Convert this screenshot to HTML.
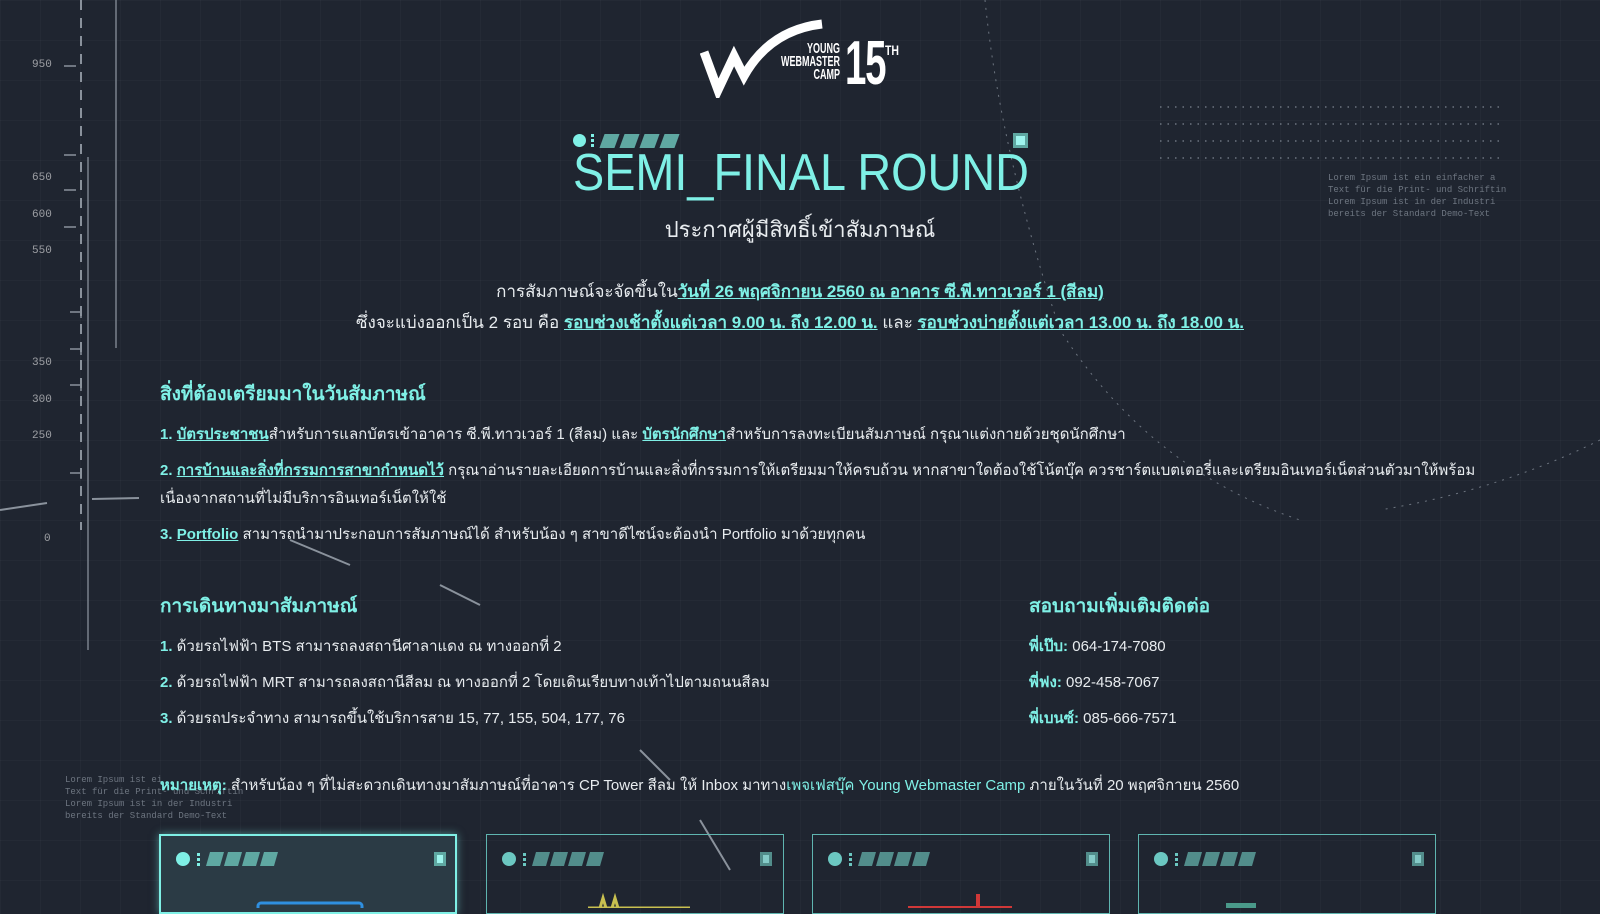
<!DOCTYPE html>
<html><head><meta charset="utf-8"><style>
*{margin:0;padding:0;box-sizing:border-box}
body{width:1600px;height:908px;overflow:hidden;background:#1f2530;font-family:"Liberation Sans","DejaVu Sans",sans-serif;color:#e8ecef;position:relative;
background-image:linear-gradient(rgba(255,255,255,.025) 1px,transparent 1px),linear-gradient(90deg,rgba(255,255,255,.025) 1px,transparent 1px);background-size:40px 40px}
.a{position:absolute}
.t{color:#7ff0e6}
u{color:#7ff0e6;font-weight:bold}
.line{white-space:nowrap;font-size:15px}
h2{font-size:19px;color:#7ff0e6;font-weight:bold;position:absolute;white-space:nowrap}
.n{color:#7ff0e6;font-weight:bold}
.card{position:absolute;top:834px;width:298px;height:80px;border:1px solid #5fb5b0}
.card.on{background:#2b3b45;border:2px solid #7ff0e6;box-shadow:0 0 8px rgba(127,240,230,.5)}
.lab{font-size:11px;color:#eee;opacity:.6;font-family:"Liberation Mono",monospace}
.lorem{font-family:"Liberation Mono",monospace;font-size:9px;color:#6d7580;line-height:12px}
</style></head><body>
<svg class="a" style="left:0;top:0" width="1600" height="908">
<line x1="81" y1="0" x2="81" y2="530" stroke="#8a929c" stroke-width="2" stroke-dasharray="10,8"/>
<line x1="116" y1="0" x2="116" y2="348" stroke="#7a828c" stroke-width="1.5"/>
<line x1="88" y1="157" x2="88" y2="650" stroke="#7a828c" stroke-width="1.5"/>
<g stroke="#8a929c" stroke-width="1.5"><line x1="64" y1="66" x2="76" y2="66"/><line x1="64" y1="155" x2="76" y2="155"/><line x1="64" y1="190" x2="76" y2="190"/><line x1="64" y1="227" x2="76" y2="227"/>
<polyline points="70,312 81,312 81,318" fill="none"/><polyline points="70,349 81,349 81,355" fill="none"/><polyline points="70,385 81,385 81,391" fill="none"/><polyline points="70,473 81,473 81,479" fill="none"/></g>
<line x1="0" y1="510" x2="47" y2="503" stroke="#8a929c" stroke-width="2"/>
<line x1="92" y1="499" x2="139" y2="498" stroke="#8a929c" stroke-width="2"/>
<path d="M290 540 L350 565 M440 585 L480 605 M640 750 L670 780 M700 820 L730 870" stroke="#8a929c" stroke-width="2"/>
<path d="M985 0 Q1000 150 1060 330 Q1150 470 1300 520" stroke="#6d7580" stroke-dasharray="2,6" fill="none"/>
<path d="M1600 440 Q1500 490 1380 510" stroke="#6d7580" stroke-dasharray="2,6" fill="none"/>
<g stroke="#6d7580" stroke-dasharray="1.5,6" stroke-width="1.5">
<line x1="1160" y1="107" x2="1500" y2="107"/><line x1="1160" y1="124" x2="1500" y2="124"/><line x1="1160" y1="141" x2="1500" y2="141"/><line x1="1160" y1="158" x2="1500" y2="158"/></g>
</svg>
<div class="a lab" style="left:32px;top:59px">950</div>
<div class="a lab" style="left:32px;top:172px">650</div>
<div class="a lab" style="left:32px;top:209px">600</div>
<div class="a lab" style="left:32px;top:245px">550</div>
<div class="a lab" style="left:32px;top:357px">350</div>
<div class="a lab" style="left:32px;top:394px">300</div>
<div class="a lab" style="left:32px;top:430px">250</div>
<div class="a lab" style="left:44px;top:533px">0</div>
<div class="a lorem" style="left:1328px;top:172px">Lorem Ipsum ist ein einfacher a<br>Text für die Print- und Schriftin<br> Lorem Ipsum ist in der Industri<br>bereits der Standard Demo-Text</div>
<div class="a lorem" style="left:65px;top:774px">Lorem Ipsum ist ei<br>Text für die Print- und Schriftin<br> Lorem Ipsum ist in der Industri<br>bereits der Standard Demo-Text</div>
<svg class="a" style="left:700px;top:18px" width="140" height="80">
<path d="M4 34 L18 72 L34 38 L44 58 Q70 12 122 6" stroke="#fff" stroke-width="9" fill="none" stroke-linejoin="miter"/>
</svg>
<div class="a" style="left:740px;top:42px;width:100px;text-align:right;color:#fff;font-weight:bold;font-size:15px;line-height:13px;transform:scaleX(.6);transform-origin:right">YOUNG<br>WEBMASTER<br>CAMP</div>
<div class="a" style="left:845px;top:33px;color:#fff;font-weight:bold;font-size:62px;line-height:62px;letter-spacing:-2px;transform:scaleX(.62);transform-origin:left">15</div>
<div class="a" style="left:885px;top:42px;color:#fff;font-weight:bold;font-size:14px;transform:scaleX(.75);transform-origin:left">TH</div>
<div class="a" style="left:573px;top:134px;width:13px;height:13px;border-radius:50%;background:#7ff0e6"></div>
<div class="a" style="left:591px;top:134px;width:3px;height:14px;background:repeating-linear-gradient(#7ff0e6 0 3px,transparent 3px 5px)"></div>
<div class="a" style="left:602px;top:134px;display:flex;gap:5px"><i style="width:15px;height:14px;background:#5fa8a2;transform:skewX(-20deg)"></i><i style="width:15px;height:14px;background:#5fa8a2;transform:skewX(-20deg)"></i><i style="width:15px;height:14px;background:#5fa8a2;transform:skewX(-20deg)"></i><i style="width:15px;height:14px;background:#5fa8a2;transform:skewX(-20deg)"></i></div>
<div class="a" style="left:1013px;top:133px;width:15px;height:15px;background:#5fa8a2;box-shadow:inset 0 0 0 3px #5fa8a2;"><div style="margin:3px;width:9px;height:9px;background:#9ff5ee"></div></div>
<div class="a t" style="left:573px;top:143px;font-size:52px;white-space:nowrap;transform:scaleX(.9);transform-origin:left">SEMI_FINAL ROUND</div>
<div class="a" style="left:550px;top:212px;width:500px;text-align:center;font-size:22px">ประกาศผู้มีสิทธิ์เข้าสัมภาษณ์</div>
<div class="a line" style="left:0;width:1600px;text-align:center;top:278px;font-size:17px">การสัมภาษณ์จะจัดขึ้นใน<u>วันที่ 26 พฤศจิกายน 2560 ณ อาคาร ซี.พี.ทาวเวอร์ 1 (สีลม)</u></div>
<div class="a line" style="left:0;width:1600px;text-align:center;top:309px;font-size:17px">ซึ่งจะแบ่งออกเป็น 2 รอบ คือ <u>รอบช่วงเช้าตั้งแต่เวลา 9.00 น. ถึง 12.00 น.</u> และ <u>รอบช่วงบ่ายตั้งแต่เวลา 13.00 น. ถึง 18.00 น.</u></div>
<h2 style="left:160px;top:379px">สิ่งที่ต้องเตรียมมาในวันสัมภาษณ์</h2>
<div class="a line" style="left:160px;top:422px"><span class="n">1.</span> <u>บัตรประชาชน</u>สำหรับการแลกบัตรเข้าอาคาร ซี.พี.ทาวเวอร์ 1 (สีลม) และ <u>บัตรนักศึกษา</u>สำหรับการลงทะเบียนสัมภาษณ์ กรุณาแต่งกายด้วยชุดนักศึกษา</div>
<div class="a line" style="left:160px;top:458px"><span class="n">2.</span> <u>การบ้านและสิ่งที่กรรมการสาขากำหนดไว้</u> กรุณาอ่านรายละเอียดการบ้านและสิ่งที่กรรมการให้เตรียมมาให้ครบถ้วน หากสาขาใดต้องใช้โน้ตบุ๊ค ควรชาร์ตแบตเตอรี่และเตรียมอินเทอร์เน็ตส่วนตัวมาให้พร้อม</div>
<div class="a line" style="left:160px;top:486px">เนื่องจากสถานที่ไม่มีบริการอินเทอร์เน็ตให้ใช้</div>
<div class="a line" style="left:160px;top:522px"><span class="n">3.</span> <u>Portfolio</u> สามารถนำมาประกอบการสัมภาษณ์ได้ สำหรับน้อง ๆ สาขาดีไซน์จะต้องนำ Portfolio มาด้วยทุกคน</div>
<h2 style="left:160px;top:591px">การเดินทางมาสัมภาษณ์</h2>
<div class="a line" style="left:160px;top:634px"><span class="n">1.</span> ด้วยรถไฟฟ้า BTS สามารถลงสถานีศาลาแดง ณ ทางออกที่ 2</div>
<div class="a line" style="left:160px;top:670px"><span class="n">2.</span> ด้วยรถไฟฟ้า MRT สามารถลงสถานีสีลม ณ ทางออกที่ 2 โดยเดินเรียบทางเท้าไปตามถนนสีลม</div>
<div class="a line" style="left:160px;top:706px"><span class="n">3.</span> ด้วยรถประจำทาง สามารถขึ้นใช้บริการสาย 15, 77, 155, 504, 177, 76</div>
<h2 style="left:1029px;top:591px">สอบถามเพิ่มเติมติดต่อ</h2>
<div class="a line" style="left:1029px;top:634px"><span class="n">พี่เป๊บ:</span> 064-174-7080</div>
<div class="a line" style="left:1029px;top:670px"><span class="n">พี่ฟง:</span> 092-458-7067</div>
<div class="a line" style="left:1029px;top:706px"><span class="n">พี่เบนซ์:</span> 085-666-7571</div>
<div class="a line" style="left:160px;top:773px"><span class="n">หมายเหตุ:</span> สำหรับน้อง ๆ ที่ไม่สะดวกเดินทางมาสัมภาษณ์ที่อาคาร CP Tower สีลม ให้ Inbox มาทาง<span class="t">เพจเฟสบุ๊ค Young Webmaster Camp</span> ภายในวันที่ 20 พฤศจิกายน 2560</div>
<div class="card on" style="left:159px"></div>
<div class="card" style="left:486px"></div>
<div class="card" style="left:812px"></div>
<div class="card" style="left:1138px"></div>
<svg class="a" style="left:0;top:830px" width="1600" height="78">
<g id="c"><circle cx="183" cy="29" r="7" fill="#7ff0e6"/><rect x="197" y="23" width="3" height="3" fill="#7ff0e6"/><rect x="197" y="28" width="3" height="3" fill="#7ff0e6"/><rect x="197" y="33" width="3" height="3" fill="#7ff0e6"/>
<g fill="#5fa8a2"><path d="M210 22h14l-4 14h-14z"/><path d="M228 22h14l-4 14h-14z"/><path d="M246 22h14l-4 14h-14z"/><path d="M264 22h14l-4 14h-14z"/></g>
<rect x="434" y="22" width="12" height="14" fill="#5fa8a2"/><rect x="437" y="25" width="6" height="8" fill="#9ff5ee"/></g>
<use href="#c" x="326" opacity=".8"/><use href="#c" x="652" opacity=".8"/><use href="#c" x="978" opacity=".8"/>
<rect x="258" y="73" width="104" height="10" rx="3" fill="none" stroke="#2f8fe0" stroke-width="3"/>
<path d="M588 78h102" stroke="#c8c050" stroke-width="3"/><path d="M600 78l3-10 3 10 M612 78l3-10 3 10" stroke="#c8c050" stroke-width="3" fill="none"/>
<path d="M908 78h104 M978 78v-14" stroke="#d03838" stroke-width="4"/>
<rect x="1226" y="73" width="30" height="12" fill="#4a9a8a"/>
</svg>
</body></html>
